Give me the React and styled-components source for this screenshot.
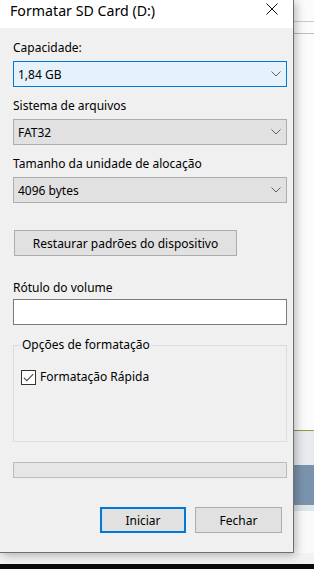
import React from 'react';
import styled, { createGlobalStyle } from 'styled-components';

const GlobalStyle = createGlobalStyle`
  html, body {
    margin: 0;
    padding: 0;
  }
  body {
    width: 314px;
    height: 569px;
    overflow: hidden;
    background: #f3f3f3;
    font-family: "Noto Sans", "Open Sans", sans-serif;
    color: #000;
  }
`;

// Screen layout: desktop row with the dialog, a strip under it, the taskbar edge
const Screen = styled.div`
    display: flex;
    flex-direction: column;
    width: 314px;
    height: 569px;
`;

const Desk = styled.div`
    display: flex;
    height: 553px;
`;

const Window = styled.div`
    position: relative;
    z-index: 1;
    width: 293px;
    border-right: 1px solid #6f6f6f;
    border-bottom: 1px solid #6f6f6f;
    background: #f0f0f0;
    display: flex;
    flex-direction: column;
    box-shadow: 2px 2px 9px rgba(0, 0, 0, 0.28);
`;

const Backdrop = styled.div`
    flex: 1;
    display: flex;
    flex-direction: column;
    background: #fbfbfb;
`;

const Band = styled.div`
    height: ${p => p.h}px;
    background: ${p => p.color};
    flex-shrink: 0;
`;

const Under = styled.div`
    height: 11px;
    background: #f2f2f2;
`;

const Taskbar = styled.div`
    flex: 1;
    background: #0b0b0d;
`;

const TitleBar = styled.div`
    height: 28px;
    background: #fff;
    display: flex;
    justify-content: space-between;
    align-items: flex-start;
    padding: 1px 15px 0 10px;
    box-sizing: border-box;
`;

const Title = styled.div`
    font-size: 14.2px;
    line-height: 20px;
    color: #000;
`;

const Close = styled.svg`
    margin-top: 2px;
`;

const Body = styled.div`
    display: flex;
    flex-direction: column;
    padding: 12px 6px 0 13px;
`;

const Label = styled.div`
    font-size: 12px;
    line-height: 16px;
    margin-top: ${p => p.top || 0}px;
    margin-bottom: ${p => p.gap || 5}px;
`;

const Select = styled.div`
    height: 26px;
    box-sizing: border-box;
    border: 1px solid ${p => (p.focused ? '#0078d7' : '#adadad')};
    background: ${p => (p.focused ? '#e5f1fb' : '#e1e1e1')};
    display: flex;
    align-items: center;
    justify-content: space-between;
    padding: 0 5px 0 4px;
    font-size: 12px;
`;

const Button = styled.div`
    height: 26px;
    width: ${p => p.w}px;
    box-sizing: border-box;
    border: ${p => (p.primary ? '2px solid #0078d7' : '1px solid #adadad')};
    background: #e1e1e1;
    display: flex;
    align-items: center;
    justify-content: center;
    font-size: 12px;
`;

const RestoreButton = styled(Button)`
    margin: 27px 0 0 1px;
`;

const TextBox = styled.div`
    height: 26px;
    box-sizing: border-box;
    border: 1px solid #7a7a7a;
    background: #fff;
`;

const Group = styled.fieldset`
    margin: 12px 0 0;
    padding: 0 7px;
    height: 105px;
    box-sizing: border-box;
    border: 1px solid #dcdcdc;
    min-width: 0;
`;

const Legend = styled.legend`
    padding: 0 1px;
    font-size: 12px;
    line-height: 16px;
`;

const CheckRow = styled.div`
    display: flex;
    align-items: center;
    gap: 4px;
    margin-top: 16px;
    font-size: 12px;
    line-height: 16px;
`;

const Box = styled.div`
    width: 15px;
    height: 15px;
    box-sizing: border-box;
    border: 1px solid #333;
    background: #fff;
    display: flex;
    align-items: center;
    justify-content: center;
`;

const Progress = styled.div`
    height: 16px;
    margin-top: 20px;
    box-sizing: border-box;
    border: 1px solid #bcbcbc;
    background: #e6e6e6;
`;

const Actions = styled.div`
    display: flex;
    justify-content: flex-end;
    gap: 9px;
    padding-right: 5px;
    margin-top: 29px;
`;

const Chevron = () => (
    <svg width="10" height="6" viewBox="0 0 10 6">
        <path d="M0.5 0.5 L5 5 L9.5 0.5" fill="none" stroke="#606060" strokeWidth="1" />
    </svg>
);

const Dropdown = ({ value, focused }) => (
    <Select focused={focused}>
        <span>{value}</span>
        <Chevron />
    </Select>
);

const App = () => {
    return (
        <>
            <GlobalStyle />
            <Screen>
                <Desk>
                    <Window>
                        <TitleBar>
                            <Title>Formatar SD Card (D:)</Title>
                            <Close width="12" height="12" viewBox="0 0 12 12">
                                <path d="M0.5 0.5 L11.5 11.5 M11.5 0.5 L0.5 11.5" stroke="#111" strokeWidth="1" />
                            </Close>
                        </TitleBar>
                        <Body>
                            <Label>Capacidade:</Label>
                            <Dropdown value="1,84 GB" focused />

                            <Label top={11}>Sistema de arquivos</Label>
                            <Dropdown value="FAT32" />

                            <Label top={11}>Tamanho da unidade de alocação</Label>
                            <Dropdown value="4096 bytes" />

                            <RestoreButton w={223}>Restaurar padrões do dispositivo</RestoreButton>

                            <Label top={24} gap={3}>Rótulo do volume</Label>
                            <TextBox />

                            <Group>
                                <Legend>Opções de formatação</Legend>
                                <CheckRow>
                                    <Box>
                                        <svg width="11" height="9" viewBox="0 0 11 9">
                                            <path d="M0.8 4.6 L3.8 7.6 L10.2 1.2" fill="none" stroke="#4a4a4a" strokeWidth="1.1" />
                                        </svg>
                                    </Box>
                                    <span>Formatação Rápida</span>
                                </CheckRow>
                            </Group>

                            <Progress />

                            <Actions>
                                <Button w={86} primary>Iniciar</Button>
                                <Button w={87}>Fechar</Button>
                            </Actions>
                        </Body>
                    </Window>
                    <Backdrop>
                        <Band h={21} color="#fbfbfb" />
                        <Band h={1} color="#c9c9c9" />
                        <Band h={11} color="#fbfbfb" />
                        <Band h={1} color="#bdbdbd" />
                        <Band h={396} color="#fbfbfb" />
                        <Band h={1} color="#8f9a45" />
                        <Band h={34} color="#e9eaee" />
                        <Band h={40} color="#7a93ad" />
                        <Band h={6} color="#dfe4ea" />
                        <Band h={42} color="#fafafa" />
                    </Backdrop>
                </Desk>
                <Under />
                <Taskbar />
            </Screen>
        </>
    );
};

export default App;
